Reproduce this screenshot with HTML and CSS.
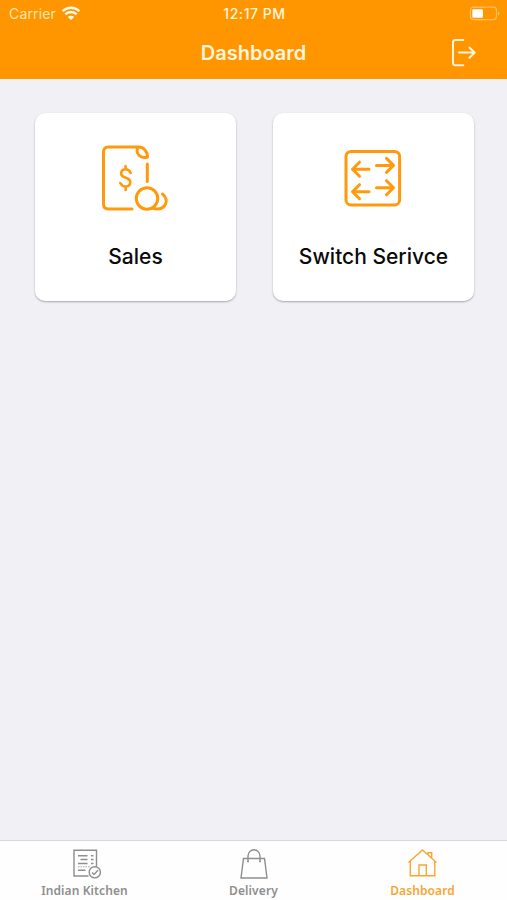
FILE: index.html
```html
<!doctype html>
<html lang="en">
  <head>
    <meta charset="UTF-8" />
    <meta name="viewport" content="width=device-width, initial-scale=1.0" />
    <title>Dashboard</title>
    <link rel="stylesheet" href="styles.css">
  </head>
  <body>
    <header class="header">
      <div class="status-bar">
        <div class="carrier">
          <span>Carrier</span>
          <svg width="20" height="16" viewBox="0 0 20 16" fill="none" stroke="currentColor" stroke-width="2.5">
            <path d="M1.6 6.1a12 12 0 0 1 16.8 0M4.4 9.3a8 8 0 0 1 11.2 0" />
            <path d="M10 15L6.8 12a4.6 4.6 0 0 1 6.4 0z" fill="currentColor" stroke="none" />
          </svg>
        </div>
        <time class="clock">12:17 PM</time>
        <svg class="battery" width="31" height="15" viewBox="0 0 31 15">
          <rect class="battery-case" x="1.5" y="1.2" width="26" height="12.4" rx="3" />
          <path class="battery-tip" d="M29 5.3v4.4l1.6-2.2z" />
          <rect x="3.3" y="3.2" width="10.6" height="8.6" rx="1" fill="#fff" />
        </svg>
      </div>
      <div class="nav-bar">
        <h1>Dashboard</h1>
        <a class="logout" href="#" aria-label="Log out">
          <svg width="26" height="30" viewBox="0 0 26 30">
            <path d="M12.300 2H4.500Q2 2 2 4.500v20.300Q2 27.300 4.500 27.300h7.800M8 14.600h15.500M18.500 9.500l5.200 5.100-5.200 5.100" />
          </svg>
        </a>
      </div>
    </header>

    <main class="cards">
      <a class="card" href="#">
        <svg class="icon" width="70" height="70" viewBox="2 -0.5 70 70">
          <path d="M33 67.500H9.500Q4.500 67.500 4.500 62.500V10.500Q4.500 5.500 9.500 5.500H39.500C45 5.500 48.500 10 48.500 15.500C43 17.500 35.500 13 39 5.500M48.300 22.500V40" />
          <path class="dollar" d="M31.700 31.500C30.500 28.500 28.500 27.800 26.600 27.800C21.500 27.800 20.500 33.800 25 35.500L28 36.800C33 38.800 32 45 26.700 45C24 45 22.500 44 21.300 41.500M26.600 24.500v3M26.600 45v3.500" />
          <circle cx="48" cy="57" r="10.700" />
          <path d="M63.500 52.500C71 58.500 66.500 69.500 54.500 67" />
        </svg>
        <span class="card-title">Sales</span>
      </a>
      <a class="card" href="#">
        <svg class="icon" width="70" height="70" viewBox="0.5 -0.7 70 70">
          <rect x="7.500" y="9.700" width="53.600" height="53.500" rx="5" />
          <path d="M30.500 27.500H14.300M21 20.500l-7 7 7 7M38 23.700H54M48 16.700l7 7-7 7" />
          <path d="M30.500 50H14.300M21 43l-7 7 7 7M38 46H54M48 39l7 7-7 7" />
        </svg>
        <span class="card-title">Switch Serivce</span>
      </a>
    </main>

    <nav class="tabs">
      <a class="tab" href="#">
        <svg width="32" height="32" viewBox="0 0 32 32">
          <path d="M19.500 28H5V2.300h22.500V18.500" />
          <path d="M9 7.700h9.500M11.500 11.500h7M9 15.500h9.500M9 22.300h7.500M22 7.700h2.500M22 11.500h2.500M22 15.500h2.500" />
          <path d="M9 18.800h12" stroke-dasharray="1.500 1" stroke-width="0.8" />
          <circle cx="25.800" cy="24.300" r="5.600" />
          <path d="M23 24.500l2 2 4-4.200" />
        </svg>
        <span>Indian Kitchen</span>
      </a>
      <a class="tab" href="#">
        <svg width="32" height="32" viewBox="0 0 32 32">
          <path d="M5.500 10.500h21L29 30H3zM10 13.500V8a6 6.200 0 0 1 12 0v5.500" />
          <path d="M9.200 13.500h1.600M21.200 13.500h1.600" />
        </svg>
        <span>Delivery</span>
      </a>
      <a class="tab active" href="#">
        <svg width="32" height="32" viewBox="0.500 0 32 32">
          <path d="M2 14.500L16 2l14 12.500M3.800 13v14.800h24.500V13M21.500 6.500V4.800h3.700v5.300M12.500 27.500V17h7.300v10.500" />
        </svg>
        <span>Dashboard</span>
      </a>
    </nav>
  </body>
</html>
```

FILE: styles.css
```css
* {
  box-sizing: border-box;
}
body {
  display: flex;
  flex-direction: column;
  height: 100vh;
  margin: 0;
  background-color: #f0f0f5;
  font-family: Inter, "Liberation Sans", sans-serif;
}
a {
  color: inherit;
  text-decoration: none;
}
svg {
  display: block;
}
.header {
  height: 79px;
  background-color: #ff9600;
  color: #fff4dc;
}
.status-bar {
  display: grid;
  grid-template-columns: 1fr auto 1fr;
  align-items: center;
  height: 27px;
  padding: 0 7px 0 9px;
}
.carrier {
  display: flex;
  align-items: center;
  gap: 5px;
  font-size: 14px;
  letter-spacing: 0.15px;
  color: #ffe4b0;
}
.carrier svg {
  color: #fff9ec;
  margin-top: -2px;
}
.clock {
  font-size: 14px;
  font-weight: 500;
  letter-spacing: 0.55px;
}
.battery {
  justify-self: end;
}
.battery-case {
  fill: none;
  stroke: #ffc060;
  stroke-width: 1.2;
}
.battery-tip {
  fill: #ffc060;
}
.nav-bar {
  display: grid;
  grid-template-columns: 1fr auto 1fr;
  align-items: center;
  height: 51px;
  padding: 0 30px;
}
.nav-bar h1 {
  grid-column: 2;
  margin: 0;
  font-size: 20px;
  font-weight: 600;
}
.logout {
  justify-self: end;
}
.logout svg {
  fill: none;
  stroke: #fff4dc;
  stroke-width: 2;
  stroke-linecap: round;
  stroke-linejoin: round;
}
.cards {
  flex: 1;
  display: grid;
  grid-template-columns: 201px 201px;
  align-content: start;
  gap: 37px;
  padding: 34px 35px;
}
.card {
  display: flex;
  flex-direction: column;
  align-items: center;
  height: 188px;
  padding-top: 28px;
  border-radius: 10px;
  background-color: #fff;
  box-shadow: 0 1px 2px rgba(0, 0, 0, 0.3);
}
.icon {
  fill: none;
  stroke: #ff9a0c;
  stroke-width: 3;
  stroke-linecap: round;
  stroke-linejoin: round;
}
.dollar {
  stroke-width: 2.6;
}
.card-title {
  margin-top: 33px;
  color: #0a0a0a;
  font-size: 21px;
  font-weight: 500;
  line-height: 26px;
}
.tabs {
  display: grid;
  grid-template-columns: repeat(3, 1fr);
  height: 60px;
  border-top: 1px solid #d8d8dc;
  background-color: #fefefe;
}
.tab {
  display: flex;
  flex-direction: column;
  align-items: center;
  padding-top: 7px;
  color: #8e8e8e;
  font-family: "Noto Sans", "Open Sans", sans-serif;
  font-size: 12px;
  font-weight: 600;
  line-height: 16px;
  letter-spacing: 0.1px;
}
.tab svg {
  margin-bottom: 3px;
  fill: none;
  stroke: currentColor;
  stroke-width: 1.4;
}
.active {
  color: #f9a530;
}
```
